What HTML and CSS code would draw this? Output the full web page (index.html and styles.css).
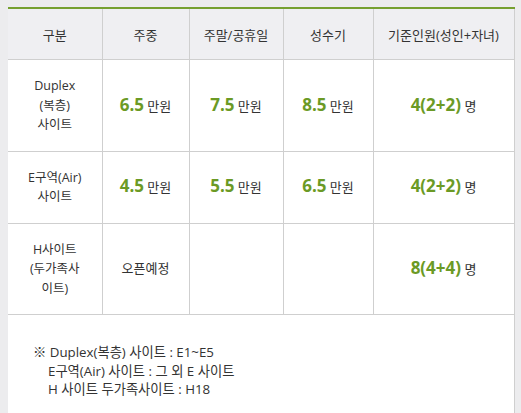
FILE: index.html
```html
<!DOCTYPE html>
<html lang="ko">
<head>
<meta charset="utf-8">
<link rel="stylesheet" href="styles.css">
</head>
<body>
<div class="wrap">
<table class="price">
  <colgroup>
    <col class="c1"><col class="c2"><col class="c3"><col class="c4"><col class="c5">
  </colgroup>
  <thead>
    <tr><th>구분</th><th>주중</th><th>주말/공휴일</th><th>성수기</th><th>기준인원(성인+자녀)</th></tr>
  </thead>
  <tbody>
    <tr>
      <td class="name">Duplex<br>(복층)<br>사이트</td>
      <td><b>6.5</b> 만원</td>
      <td><b>7.5</b> 만원</td>
      <td><b>8.5</b> 만원</td>
      <td><b>4(2+2)</b> 명</td>
    </tr>
    <tr>
      <td class="name">E구역(Air)<br>사이트</td>
      <td><b>4.5</b> 만원</td>
      <td><b>5.5</b> 만원</td>
      <td><b>6.5</b> 만원</td>
      <td><b>4(2+2)</b> 명</td>
    </tr>
    <tr>
      <td class="name">H사이트<br>(두가족사<br>이트)</td>
      <td class="plain">오픈예정</td>
      <td></td>
      <td></td>
      <td><b>8(4+4)</b> 명</td>
    </tr>
    <tr>
      <td colspan="5" class="note">
        <p>※ Duplex(복층) 사이트 : E1~E5</p>
        <p class="ind">E구역(Air) 사이트 : 그 외 E 사이트</p>
        <p class="ind">H 사이트 두가족사이트 : H18</p>
      </td>
    </tr>
  </tbody>
</table>
</div>
</body>
</html>
```

FILE: styles.css
```css
html, body {
  margin: 0;
  padding: 0;
  background: #ececee;
}
body {
  padding: 7px 0 0 8px;
  font-family: "Open Sans", "Noto Sans CJK KR", sans-serif;
  color: #333;
}
.wrap {
  width: 506px;
  background: #fff;
}
.price {
  width: 506px;
  border-collapse: collapse;
  table-layout: fixed;
  border-top: 2px solid #76a030;
  border-right: 1px solid #cfcfcf;
}
.c1 { width: 94px; }
.c2 { width: 87px; }
.c3 { width: 94px; }
.c4 { width: 90px; }
.c5 { width: 141px; }
th {
  background: #efeff2;
  font-weight: normal;
  font-size: 13px;
  height: 50px;
  padding: 0;
  border-left: 1px solid #cfcfcf;
  border-bottom: 1px solid #cfcfcf;
  color: #333;
}
th:first-child { border-left: none; }
td {
  text-align: center;
  font-size: 13px;
  line-height: 19.5px;
  padding: 16px 0;
  border-left: 1px solid #cfcfcf;
  border-bottom: 1px solid #cfcfcf;
  vertical-align: middle;
  color: #333;
}
td:first-child { border-left: none; }
td.name { font-size: 12.5px; }
td b {
  color: #6b9a25;
  font-size: 17px;
  font-weight: bold;
}
td.note {
  text-align: left;
  border-left: none;
  border-bottom: none;
  padding: 28px 0 30px 25px;
  font-size: 13.3px;
  line-height: 18.7px;
}
.note p { margin: 0; }
.note p.ind { padding-left: 15px; }
```
